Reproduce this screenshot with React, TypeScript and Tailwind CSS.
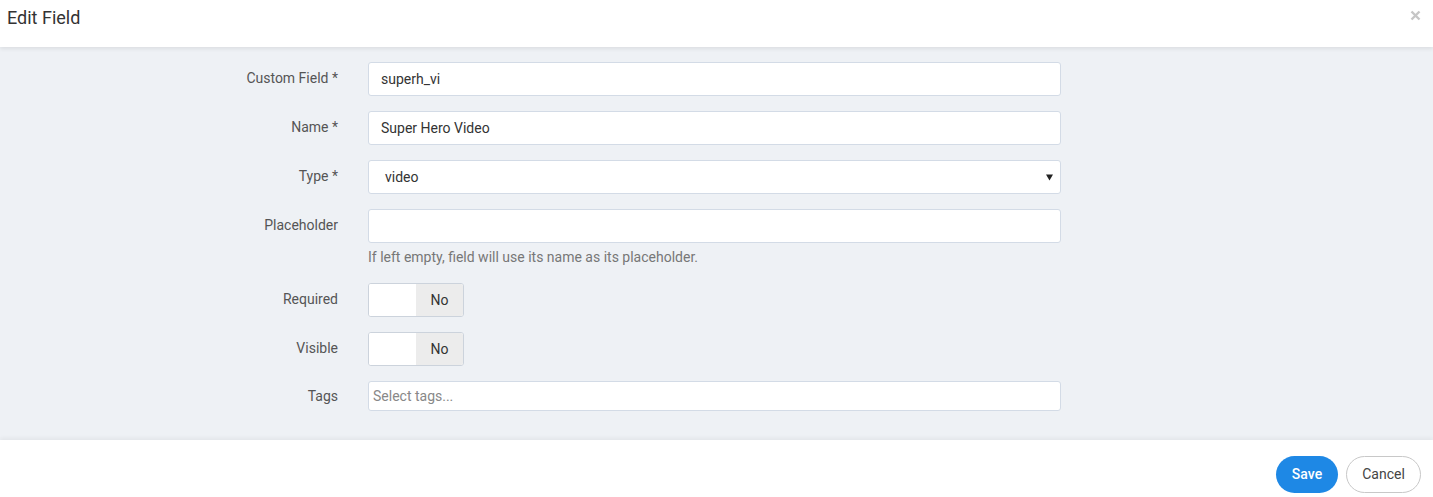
import { useState } from "react";

const Label = ({ text }: { text: string }) => (
  <div className="w-[338px] shrink-0 text-right text-[14px] text-[#555] pt-[6px]">{text}</div>
);

const Toggle = () => (
  <div className="flex h-[34px] w-[96px] overflow-hidden rounded-[3px] border border-[#ccd3dc] bg-white">
    <div className="w-[47px] bg-white" />
    <div className="flex flex-1 items-center justify-center bg-[#ececec] text-[14px] text-[#333]">No</div>
  </div>
);

export default function App() {
  const [customField, setCustomField] = useState("superh_vi");
  const [name, setName] = useState("Super Hero Video");

  return (
    <div className="flex h-[497px] w-full flex-col bg-white font-['Roboto',sans-serif]">
      <div className="relative z-10 flex h-[47px] shrink-0 items-start justify-between bg-white px-[7px] shadow-[0_2px_4px_rgba(0,0,0,0.08)]">
        <h4 className="pt-[6px] text-[18px] leading-[24px] text-[#333]">Edit Field</h4>
        <button className="mr-[5px] mt-[10px]">
          <svg width="11" height="11" viewBox="0 0 11 11">
            <path d="M1.5 1.5 L9.5 9.5 M9.5 1.5 L1.5 9.5" stroke="#c6c6c6" strokeWidth="2.4" />
          </svg>
        </button>
      </div>

      <div className="flex flex-1 flex-col gap-[15px] bg-[#eef1f5] pt-[15px]">
        <div className="flex gap-[30px]">
          <Label text="Custom Field *" />
          <input
            value={customField}
            onChange={(e) => setCustomField(e.target.value)}
            className="h-[34px] w-[693px] rounded-[3px] border border-[#d3dbe6] bg-white px-[12px] text-[14px] text-[#333] outline-none"
          />
        </div>
        <div className="flex gap-[30px]">
          <Label text="Name *" />
          <input
            value={name}
            onChange={(e) => setName(e.target.value)}
            className="h-[34px] w-[693px] rounded-[3px] border border-[#d3dbe6] bg-white px-[12px] text-[14px] text-[#333] outline-none"
          />
        </div>
        <div className="flex gap-[30px]">
          <Label text="Type *" />
          <div className="flex h-[34px] w-[693px] items-center justify-between rounded-[3px] border border-[#d3dbe6] bg-white pl-[16px] pr-[6px] text-[14px] text-[#333]">
            <span>video</span>
            <svg width="7" height="7" viewBox="0 0 7 7" className="mr-[1px]">
              <path d="M0 0.5 H7 L3.5 6.5 Z" fill="#222" />
            </svg>
          </div>
        </div>
        <div className="flex gap-[30px]">
          <Label text="Placeholder" />
          <div className="flex flex-col">
            <input className="h-[34px] w-[693px] rounded-[3px] border border-[#d3dbe6] bg-white px-[12px] text-[14px] text-[#333] outline-none" />
            <p className="mt-[4px] text-[14px] text-[#777]">If left empty, field will use its name as its placeholder.</p>
          </div>
        </div>
        <div className="flex gap-[30px]">
          <Label text="Required" />
          <Toggle />
        </div>
        <div className="flex gap-[30px]">
          <Label text="Visible" />
          <Toggle />
        </div>
        <div className="flex gap-[30px]">
          <div className="w-[338px] shrink-0 pt-[5px] text-right text-[14px] text-[#555]">Tags</div>
          <div className="flex h-[30px] w-[693px] items-center rounded-[3px] border border-[#d3dbe6] bg-white px-[4px] text-[14px] text-[#888]">
            Select tags...
          </div>
        </div>
      </div>

      <div className="flex h-[57px] shrink-0 items-start justify-end gap-[8px] bg-white pr-[12px] pt-[16px] shadow-[0_-2px_4px_rgba(0,0,0,0.05)]">
        <button className="h-[37px] w-[62px] rounded-full bg-[#1e88e5] text-[14px] font-medium text-white">Save</button>
        <button className="h-[37px] w-[75px] rounded-full border border-[#c8c8c8] bg-white text-[14px] text-[#444]">Cancel</button>
      </div>
    </div>
  );
}
